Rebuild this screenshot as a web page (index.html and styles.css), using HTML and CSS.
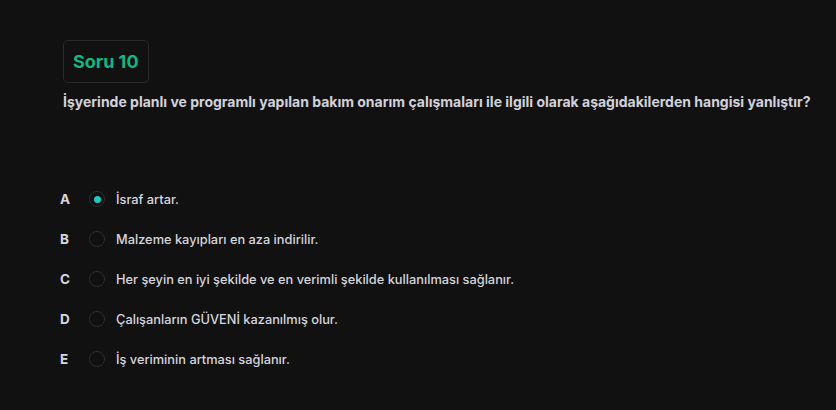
FILE: index.html
```html
<!DOCTYPE html>
<html lang="tr">
<head>
<meta charset="utf-8">
<link rel="stylesheet" href="styles.css">
</head>
<body>
<main class="quiz">
  <div class="badge">Soru 10</div>
  <p class="question">İşyerinde planlı ve programlı yapılan bakım onarım çalışmaları ile ilgili olarak aşağıdakilerden hangisi yanlıştır?</p>
  <ul class="options">
    <li class="option"><span class="letter">A</span><span class="radio checked"></span><span class="text">İsraf artar.</span></li>
    <li class="option"><span class="letter">B</span><span class="radio"></span><span class="text">Malzeme kayıpları en aza indirilir.</span></li>
    <li class="option"><span class="letter">C</span><span class="radio"></span><span class="text">Her şeyin en iyi şekilde ve en verimli şekilde kullanılması sağlanır.</span></li>
    <li class="option"><span class="letter">D</span><span class="radio"></span><span class="text">Çalışanların GÜVENİ kazanılmış olur.</span></li>
    <li class="option"><span class="letter">E</span><span class="radio"></span><span class="text">İş veriminin artması sağlanır.</span></li>
  </ul>
</main>
</body>
</html>
```
FILE: styles.css
```css
html, body {
  margin: 0;
  padding: 0;
  background: #111111;
}
body {
  font-family: "Inter", "Open Sans", sans-serif;
  color: #d6d6de;
}
.quiz {
  padding: 40px 0 0 63px;
}
.badge {
  display: inline-flex;
  align-items: center;
  height: 41px;
  padding: 0 9px;
  border: 1px solid #2a2a2a;
  border-radius: 5px;
  color: #14b681;
  font-size: 18px;
  font-weight: 700;
}
.question {
  margin: 10px 0 0;
  font-size: 14px;
  font-weight: 700;
  line-height: 18px;
  color: #d2d2da;
}
.options {
  list-style: none;
  margin: 78px 0 0 -3px;
  padding: 0;
  display: flex;
  flex-direction: column;
  gap: 20px;
}
.option {
  display: flex;
  align-items: center;
  height: 20px;
}
.letter {
  width: 29px;
  font-size: 13.5px;
  font-weight: 700;
  color: #d4d6e0;
}
.radio {
  box-sizing: border-box;
  width: 16px;
  height: 16px;
  border: 1px solid #2e2e2e;
  border-radius: 50%;
  display: flex;
  align-items: center;
  justify-content: center;
  margin-right: 11px;
}
.radio.checked::after {
  content: "";
  width: 7px;
  height: 7px;
  border-radius: 50%;
  background: #1ec9bf;
}
.text {
  font-size: 12.8px;
  font-weight: 500;
  color: #d6d6de;
}
```
